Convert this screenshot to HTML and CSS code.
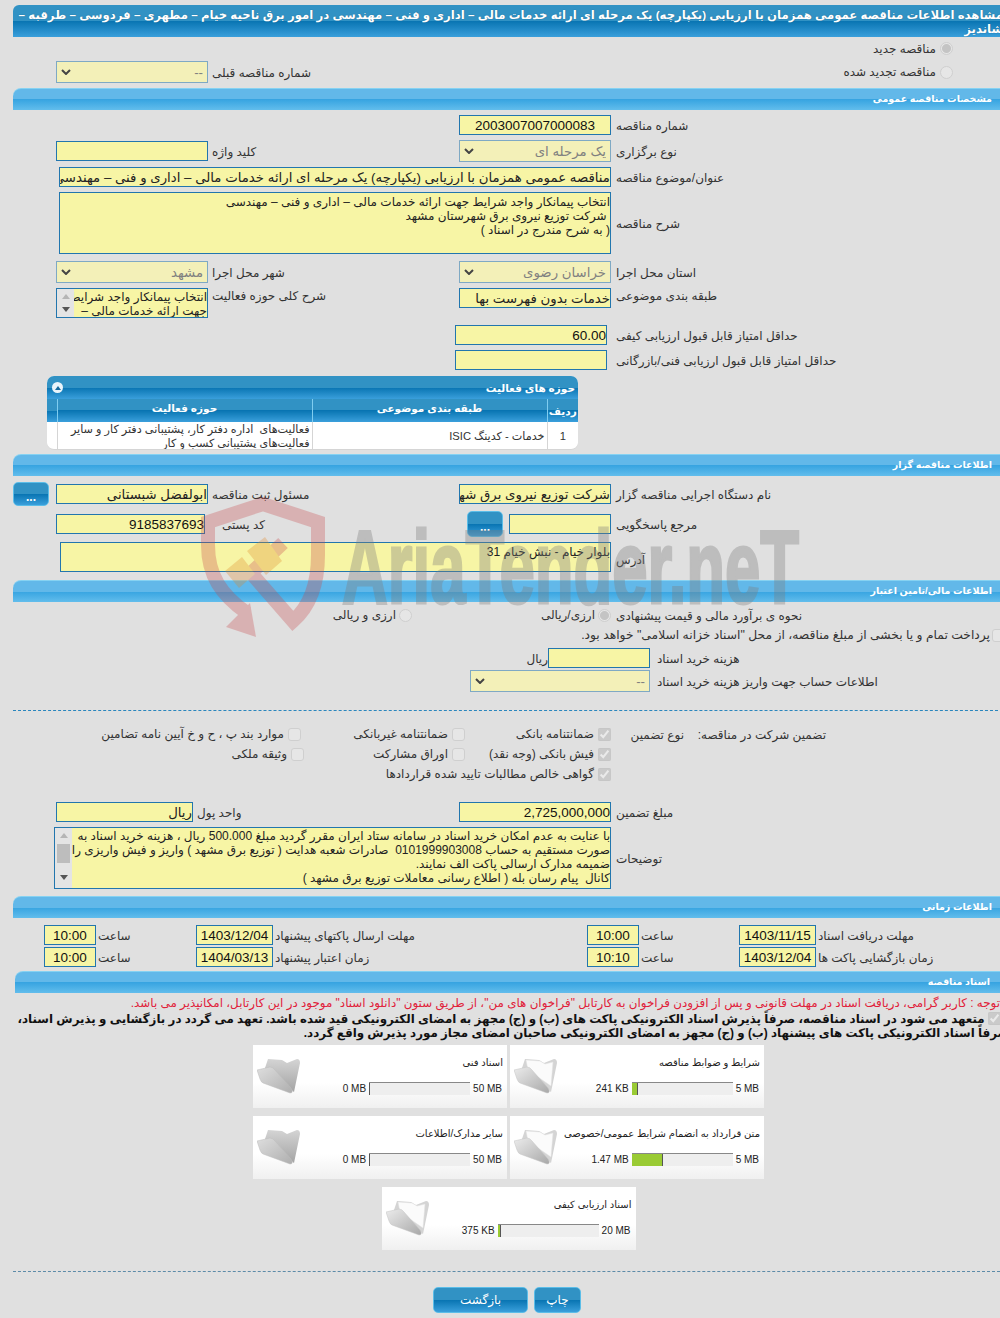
FILE: index.html
```html
<!DOCTYPE html>
<html lang="fa">
<head>
    <meta charset="UTF-8">
    <title>مشاهده اطلاعات مناقصه</title>
    <link rel="stylesheet" href="styles.css">
</head>
<body>
<svg class="defs" width="0" height="0">
    <defs>
        <linearGradient id="folderBack" x1="0" y1="0" x2="0" y2="1">
            <stop offset="0" stop-color="#d4d4d4"/>
            <stop offset="1" stop-color="#a4a4a4"/>
        </linearGradient>
        <linearGradient id="folderFront" x1="0" y1="0" x2="1" y2="1">
            <stop offset="0" stop-color="#dedede"/>
            <stop offset="1" stop-color="#aeaeae"/>
        </linearGradient>
        <linearGradient id="folderFrontLight" x1="0" y1="0" x2="1" y2="1">
            <stop offset="0" stop-color="#ececec"/>
            <stop offset="1" stop-color="#a8a8a8"/>
        </linearGradient>
        <symbol id="folderGrey" viewBox="0 0 43 36">
            <path d="M11 1 L25 2 L30 5 L40 1 Q43 1 43 5 L37 34 L8 10 Z" fill="url(#folderBack)"/>
            <path d="M0 12 L13 9 Q16 9 18 12 L34 30 Q37 35 33 35 L6 25 Q4 24 3 21 Z" fill="url(#folderFront)" stroke="#bdbdbd" stroke-width=".5"/>
        </symbol>
        <symbol id="folderPaper" viewBox="0 0 43 36">
            <path d="M11 1 L25 2 L30 5 L40 1 Q43 1 43 5 L37 34 L8 10 Z" fill="#d4d4d4"/>
            <path d="M12 2 L26 3 L31 6 L39 4 L37 28 L14 12 Z" fill="#fbfbfb" stroke="#e2e2e2" stroke-width=".5"/>
            <path d="M0 12 L13 9 Q16 9 18 12 L34 30 Q37 35 33 35 L6 25 Q4 24 3 21 Z" fill="url(#folderFrontLight)" stroke="#c4c4c4" stroke-width=".5"/>
        </symbol>
    </defs>
</svg>

<div class="page">
    <h1 class="title-bar">مشاهده اطلاعات مناقصه عمومی همزمان با ارزیابی (یکپارچه) یک مرحله ای ارائه خدمات مالی – اداری و فنی – مهندسی در امور برق ناحیه خیام – مطهری – فردوسی – طرقبه – شاندیز</h1>

    <div class="row row-radio">
        <span></span><span></span><span></span><span></span>
        <label class="radio-right"><input type="radio" name="renew" checked disabled> مناقصه جدید</label>
    </div>
    <div class="row row-radio2">
        <span></span>
        <select class="ctl ctl-off" disabled><option>--</option></select>
        <span class="lbl">شماره مناقصه قبلی</span>
        <span></span>
        <label class="radio-right"><input type="radio" name="renew" disabled> مناقصه تجدید شده</label>
    </div>

    <div class="bar">مشخصات مناقصه عمومی</div>

    <div class="row first">
        <span></span><span></span><span></span>
        <input class="ctl num num-mid" value="2003007007000083" readonly>
        <span class="lbl lbl-r">شماره مناقصه</span>
    </div>
    <div class="row h22">
        <span></span>
        <input class="ctl" readonly>
        <span class="lbl">کلید واژه</span>
        <select class="ctl ctl-off" disabled><option>یک مرحله ای</option></select>
        <span class="lbl lbl-r">نوع برگزاری</span>
    </div>
    <div class="row">
        <input class="ctl wide" value="مناقصه عمومی همزمان با ارزیابی (یکپارچه) یک مرحله ای ارائه خدمات مالی – اداری و فنی – مهندسی" readonly>
        <span class="lbl lbl-r">عنوان/موضوع مناقصه</span>
    </div>
    <div class="row h62">
        <textarea class="ctl wide area" readonly>انتخاب پیمانکار واجد شرایط جهت ارائه خدمات مالی – اداری و فنی – مهندسی
 شرکت توزیع نیروی برق شهرستان مشهد
( به شرح مندرج در اسناد )</textarea>
        <span class="lbl lbl-r">شرح مناقصه</span>
    </div>
    <div class="row h22 mt7">
        <span></span>
        <select class="ctl ctl-off" disabled><option>مشهد</option></select>
        <span class="lbl">شهر محل اجرا</span>
        <select class="ctl ctl-off" disabled><option>خراسان رضوی</option></select>
        <span class="lbl lbl-r">استان محل اجرا</span>
    </div>
    <div class="row h30 top">
        <span></span>
        <div class="ctl scrollbox">
            <div class="scroll-track">
                <i class="arrow-up"></i>
                <i class="arrow-down"></i>
            </div>
            <div class="scroll-text">انتخاب پیمانکار واجد شرایط<br>جهت ارائه خدمات مالی –</div>
        </div>
        <span class="lbl lbl-top">شرح کلی حوزه فعالیت</span>
        <input class="ctl" value="خدمات بدون فهرست بها" readonly>
        <span class="lbl lbl-r lbl-top">طبقه بندی موضوعی</span>
    </div>
    <div class="row mt7">
        <span></span><span></span><span></span>
        <input class="ctl num score" value="60.00" readonly>
        <span class="lbl lbl-r">حداقل امتیاز قابل قبول ارزیابی کیفی</span>
    </div>
    <div class="row">
        <span></span><span></span><span></span>
        <input class="ctl score" readonly>
        <span class="lbl lbl-r">حداقل امتیاز قابل قبول ارزیابی فنی/بازرگانی</span>
    </div>

    <div class="panel">
        <div class="panel-head">
            <span>حوزه های فعالیت</span>
            <span class="collapse"><i></i></span>
        </div>
        <table class="grid">
            <colgroup>
                <col class="col-no"><col class="col-cat"><col class="col-act"><col class="col-end">
            </colgroup>
            <thead>
                <tr><th class="th-no">ردیف</th><th>طبقه بندی موضوعی</th><th>حوزه فعالیت</th><th></th></tr>
            </thead>
            <tbody>
                <tr>
                    <td class="cell-no">1</td>
                    <td>خدمات - کدینگ ISIC</td>
                    <td class="cell-act">فعالیت‌های &nbsp;اداره دفتر کار، پشتیبانی دفتر کار و سایر فعالیت‌های پشتیبانی کسب و کار</td>
                    <td></td>
                </tr>
            </tbody>
        </table>
    </div>

    <div class="bar bar-tight">اطلاعات مناقصه گزار</div>

    <div class="row h24 first6">
        <button class="dots dots-left">...</button>
        <input class="ctl" value="ابولفضل شبستانی" readonly>
        <span class="lbl">مسئول ثبت مناقصه</span>
        <input class="ctl" value="شرکت توزیع نیروی برق شهرستان مشهد" readonly>
        <span class="lbl lbl-r">نام دستگاه اجرایی مناقصه گزار</span>
    </div>
    <div class="row h24">
        <span></span>
        <div class="span-left">
            <input class="ctl w149 num" value="9185837693" readonly>
            <span class="lbl lbl-far">کد پستی</span>
        </div>
        <div class="ref-cell">
            <button class="dots">...</button>
            <input class="ctl w102" readonly>
        </div>
        <span class="lbl lbl-r">مرجع پاسخگویی</span>
    </div>
    <div class="row h30 mt7">
        <textarea class="ctl wide addr" readonly>بلوار خیام - نبش خیام 31</textarea>
        <span class="lbl lbl-r lbl-low">آدرس</span>
    </div>

    <div class="bar bar-finance">اطلاعات مالی/تامین اعتبار</div>

    <div class="row h20 mt4">
        <span></span><span></span>
        <label class="radio-left radio-far"><input type="radio" name="cur" disabled> ارزی و ریالی</label>
        <label class="radio-left"><input type="radio" name="cur" checked disabled> ارزی/ریالی</label>
        <span class="lbl lbl-r">نحوه ی برآورد مالی و قیمت پیشنهادی</span>
    </div>
    <label class="treasury"><input type="checkbox" disabled> پرداخت تمام و یا بخشی از مبلغ مناقصه، از محل "اسناد خزانه اسلامی" خواهد بود.</label>
    <div class="cost-row">
        <span></span>
        <div class="cost-cell">
            <span class="unit">ریال</span>
            <input class="ctl w102" readonly>
        </div>
        <span class="lbl lbl-r">هزینه خرید اسناد</span>
    </div>
    <div class="cost-row h22">
        <span></span>
        <select class="ctl ctl-off" disabled><option>--</option></select>
        <span class="lbl lbl-r">اطلاعات حساب جهت واریز هزینه خرید اسناد</span>
    </div>

    <hr class="dash">

    <div class="guarantee">
        <span></span>
        <span class="lbl">تضمین شرکت در مناقصه:</span>
        <span class="lbl">نوع تضمین</span>
        <label class="check"><input type="checkbox" checked disabled> ضمانتنامه بانکی</label>
        <label class="check"><input type="checkbox" disabled> ضمانتنامه غیربانکی</label>
        <label class="check"><input type="checkbox" disabled> موارد بند پ ، ح و خ آیین نامه تضامین</label>

        <span></span><span></span><span></span>
        <label class="check"><input type="checkbox" checked disabled> فیش بانکی (وجه نقد)</label>
        <label class="check"><input type="checkbox" disabled> اوراق مشارکت</label>
        <label class="check shift"><input type="checkbox" disabled> وثیقه ملکی</label>

        <span></span><span></span><span></span>
        <label class="check check-long"><input type="checkbox" checked disabled> گواهی خالص مطالبات تایید شده قراردادها</label>
    </div>

    <div class="row amount">
        <span></span>
        <div class="span-left">
            <input class="ctl w137" value="ریال" readonly>
            <span class="lbl">واحد پول</span>
        </div>
        <input class="ctl num" value="2,725,000,000" readonly>
        <span class="lbl lbl-r">مبلغ تضمین</span>
    </div>
    <div class="row h62">
        <div class="ctl wide notes">
            <div class="scroll-track scroll-tall">
                <i class="arrow-up"></i>
                <b class="thumb"></b>
                <i class="arrow-down"></i>
            </div>
            <div class="scroll-text">با عنایت به عدم امکان خرید اسناد در سامانه ستاد ایران مقرر گردید مبلغ 500.000 ریال ، هزینه خرید اسناد به<br>صورت مستقیم به حساب 0101999903008 &nbsp;صادرات شعبه هدایت ( توزیع برق مشهد ) واریز و فیش واریزی را<br>ضمیمه مدارک ارسالی پاکت الف نمایند.<br>کانال &nbsp;پیام رسان بله ( اطلاع رسانی معاملات توزیع برق مشهد )</div>
        </div>
        <span class="lbl lbl-r">توضیحات</span>
    </div>

    <div class="bar bar-time">اطلاعات زمانی</div>

    <div class="time-row first-time">
        <input class="ctl num-c" value="10:00" readonly>
        <span class="lbl">ساعت</span>
        <input class="ctl num-c" value="1403/12/04" readonly>
        <span class="lbl">مهلت ارسال پاکتهای پیشنهاد</span>
        <input class="ctl num-c" value="10:00" readonly>
        <span class="lbl">ساعت</span>
        <input class="ctl num-c" value="1403/11/15" readonly>
        <span class="lbl">مهلت دریافت اسناد</span>
    </div>
    <div class="time-row">
        <input class="ctl num-c" value="10:00" readonly>
        <span class="lbl">ساعت</span>
        <input class="ctl num-c" value="1404/03/13" readonly>
        <span class="lbl">زمان اعتبار پیشنهاد</span>
        <input class="ctl num-c" value="10:10" readonly>
        <span class="lbl">ساعت</span>
        <input class="ctl num-c" value="1403/12/04" readonly>
        <span class="lbl">زمان بازگشایی پاکت ها</span>
    </div>

    <div class="bar bar-docs">اسناد مناقصه</div>

    <p class="notice">توجه : کاربر گرامی، دریافت اسناد در مهلت قانونی و پس از افزودن فراخوان به کارتابل "فراخوان های من"، از طریق ستون "دانلود اسناد" موجود در این کارتابل، امکانپذیر می باشد.</p>
    <p class="pledge"><input type="checkbox" checked disabled> متعهد می شود در اسناد مناقصه، صرفاً پذیرش اسناد الکترونیکی پاکت های (ب) و (ج) مجهز به امضای الکترونیکی قید شده باشد. تعهد می گردد در بازگشایی و پذیرش اسناد،<br>صرفاً اسناد الکترونیکی پاکت های پیشنهاد (ب) و (ج) مجهز به امضای الکترونیکی صاحبان امضای مجاز مورد پذیرش واقع گردد.</p>

    <div class="cards">
        <div class="card">
            <div class="card-body">
                <div class="card-title">شرایط و ضوابط مناقصه</div>
                <div class="usage"><span>5 MB</span><div class="meter"><b style="width: 5%"></b></div><span>241 KB</span></div>
            </div>
            <svg class="folder"><use href="#folderPaper"/></svg>
        </div>
        <div class="card">
            <div class="card-body">
                <div class="card-title">اسناد فنی</div>
                <div class="usage"><span>50 MB</span><div class="meter"><b style="width: 0"></b></div><span>0 MB</span></div>
            </div>
            <svg class="folder"><use href="#folderGrey"/></svg>
        </div>
        <div class="card">
            <div class="card-body">
                <div class="card-title">متن قرارداد به انضمام شرایط عمومی/خصوصی</div>
                <div class="usage"><span>5 MB</span><div class="meter"><b style="width: 30%"></b></div><span>1.47 MB</span></div>
            </div>
            <svg class="folder"><use href="#folderPaper"/></svg>
        </div>
        <div class="card">
            <div class="card-body">
                <div class="card-title">سایر مدارک/اطلاعات</div>
                <div class="usage"><span>50 MB</span><div class="meter"><b style="width: 0"></b></div><span>0 MB</span></div>
            </div>
            <svg class="folder"><use href="#folderGrey"/></svg>
        </div>
        <div class="card">
            <div class="card-body">
                <div class="card-title">اسناد ارزیابی کیفی</div>
                <div class="usage"><span>20 MB</span><div class="meter"><b style="width: 2%"></b></div><span>375 KB</span></div>
            </div>
            <svg class="folder"><use href="#folderPaper"/></svg>
        </div>
    </div>

    <hr class="dash dash-bottom">

    <div class="actions">
        <button class="btn btn-back">بازگشت</button>
        <button class="btn btn-print">چاپ</button>
    </div>

    <!-- watermark lies over the whole form -->
    <div class="watermark">
        <svg class="wm-logo" viewBox="0 0 140 150">
            <path d="M52 118 C26 100 13 80 13 50 L13 27 L68 9 L123 27 L123 60 C123 92 114 112 98 126 L56 78 L88 48" fill="none" stroke="#c8474a" stroke-width="14"/>
            <path d="M31 132 L61 142 L55 108 Z" fill="#c8474a"/>
            <path d="M30 76 L47 62 L60 79 L44 93 Z M52 56 L70 42 L87 66 L71 80 Z" fill="#e0892a"/>
        </svg>
        <span class="wm-text">AriaTender.neT</span>
    </div>
</div>
</body>
</html>
```

FILE: styles.css
```css
body {
    margin: 0;
    padding: 0;
    background-color: #e0e0e0;
    font-family: "Liberation Sans", "DejaVu Sans", sans-serif;
    font-size: 12px;
    color: #333;
}
.defs {
    position: absolute;
}
.page {
    position: relative;
    width: 1000px;
    height: 1318px;
    overflow: hidden;
    padding-top: 5px;
    box-sizing: border-box;
}
.title-bar {
    margin: 0 -3px 0 13px;
    height: 32px;
    padding: 3px 0 0 0;
    box-sizing: border-box;
    direction: rtl;
    font-size: 11.7px;
    line-height: 14px;
    font-weight: bold;
    color: #fff;
    border-top-left-radius: 6px;
    background: linear-gradient(#3192c4 0, #3192c4 50%, #0874b2 50%, #3a9fdb 100%);
    text-shadow: 0 0 1px #12587f;
}
.bar {
    margin: 5px 0 0 13px;
    height: 22px;
    line-height: 20px;
    padding-right: 8px;
    box-sizing: border-box;
    direction: rtl;
    font-size: 9.5px;
    font-weight: bold;
    color: #fff;
    border-top: 1px solid #86d2f2;
    border-top-left-radius: 8px;
    background: linear-gradient(#62b8e9 0, #62b8e9 50%, #37a4e1 50%, #62bdec 100%);
}
.bar-tight {
    margin-top: 4px;
}
.bar-finance {
    margin-top: 8px;
}
.bar-time {
    margin-top: 7px;
}
.bar-docs {
    margin: 4px 0 0 15px;
    padding-right: 10px;
}

/* form rows: left control, left label, right control, right label */
.row {
    display: grid;
    grid-template-columns: 56px 152px 251px 152px 1fr;
    align-items: center;
    height: 20px;
    margin-top: 5px;
}
.first { margin-top: 5px; }
.first6 { margin-top: 6px; height: 24px; }
.h20 { height: 20px; }
.h22 { height: 22px; }
.h24 { height: 24px; }
.h30 { height: 30px; }
.h62 { height: 62px; }
.mt4 { margin-top: 3px; }
.mt7 { margin-top: 7px; }
.top { align-items: start; }
.row-radio {
    height: 23px;
    margin-top: 0;
}
.row-radio2 {
    height: 22px;
    margin-top: 1px;
}
.amount {
    margin-top: 18px;
}
.lbl {
    direction: rtl;
    text-align: left;
    padding-left: 4px;
    margin-top: 2px;
    white-space: nowrap;
    line-height: 15px;
}
.lbl-r {
    padding-left: 5px;
}
.lbl-top {
    margin-top: 1px;
}
.lbl-low {
    margin-top: 7px;
}
.lbl-far {
    padding-left: 17px;
}
.ctl {
    display: block;
    width: 152px;
    height: 20px;
    box-sizing: border-box;
    margin: 0;
    padding: 0;
    border: 1px solid #2276ae;
    border-radius: 0;
    background-color: #f7f5a5;
    direction: rtl;
    font-family: inherit;
    font-size: 13.3px;
    color: #222;
    outline: none;
}
.ctl-off {
    appearance: none;
    opacity: 1;
    height: 22px;
    padding: 0 4px;
    border-color: #7fa9c4;
    background-color: #f3f0b8;
    background-image: url("data:image/svg+xml,%3Csvg xmlns='http://www.w3.org/2000/svg' width='10' height='6'%3E%3Cpath d='M1 1l4 4 4-4' fill='none' stroke='%23444' stroke-width='2'/%3E%3C/svg%3E");
    background-repeat: no-repeat;
    background-position: left 4px center;
    color: #808080;
}
.num {
    font-size: 13.5px;
    color: #111;
}
.num-mid {
    text-align: center;
}
.num-c {
    width: auto;
    text-align: center;
    font-size: 13.5px;
    padding: 0;
    color: #111;
}
.wide {
    grid-column: 1 / 5;
    margin-left: 59px;
    width: 552px;
}
.area {
    height: 62px;
    line-height: 14px;
    resize: none;
    overflow: hidden;
    padding: 2px 0;
    font-size: 12px;
}
.addr {
    height: 30px;
    margin-left: 60px;
    width: 551px;
    resize: none;
    overflow: hidden;
    padding: 2px 0;
    font-size: 12px;
    line-height: 14px;
}
.score {
    margin-left: -4px;
}
.w149 { width: 149px; }
.w137 { width: 137px; }
.w102 { width: 102px; }
.span-left {
    grid-column: 2 / 4;
    display: flex;
    align-items: center;
}
.ref-cell {
    display: flex;
    justify-content: space-between;
    align-items: center;
    padding-left: 8px;
}
.radio-right,
.radio-left {
    display: flex;
    direction: rtl;
    align-items: center;
    gap: 4px;
}
.radio-right {
    justify-self: end;
    margin-right: 47px;
    white-space: nowrap;
}
.radio-left {
    gap: 3px;
}
.radio-far {
    padding-right: 47px;
}
input[type="radio"],
input[type="checkbox"] {
    margin: 0;
    flex: none;
    width: 13px;
    height: 13px;
}
input[type="radio"] {
    appearance: none;
    box-sizing: border-box;
    border: 1px solid #cfcfcf;
    border-radius: 50%;
    background-color: #e6e6e6;
}
input[type="radio"]:checked {
    background: radial-gradient(circle, #c4c4c4 0, #c4c4c4 4px, #e6e6e6 5px);
}
input[type="checkbox"]:not(:checked) {
    appearance: none;
    box-sizing: border-box;
    border: 1px solid #cfcfcf;
    border-radius: 3px;
    background-color: #e6e6e6;
}

/* scrolling text boxes, drawn because the scrollbar sits on the left */
.scrollbox,
.notes {
    display: flex;
    padding: 0;
    overflow: hidden;
    direction: ltr;
}
.scrollbox {
    height: 30px;
}
.notes {
    height: 62px;
    margin-left: 54px;
    width: 557px;
}
.scroll-track {
    flex: none;
    width: 17px;
    display: flex;
    flex-direction: column;
    justify-content: space-between;
    align-items: center;
    padding: 5px 0;
    box-sizing: border-box;
    background-color: #e4e4e4;
}
.scroll-tall {
    justify-content: flex-start;
}
.thumb {
    width: 13px;
    height: 19px;
    margin: 6px 0 12px;
    background-color: #bdbdbd;
}
.arrow-up {
    border: 4px solid transparent;
    border-top: 0;
    border-bottom: 5px solid #b5b5b5;
}
.arrow-down {
    border: 4px solid transparent;
    border-bottom: 0;
    border-top: 5px solid #555;
}
.scroll-text {
    flex: 1;
    direction: rtl;
    font-size: 12px;
    line-height: 14px;
    white-space: nowrap;
    overflow: hidden;
    padding: 1px 0 0 0;
}

/* activity table */
.panel {
    width: 531px;
    margin: 6px 0 0 47px;
    border-radius: 7px;
    overflow: hidden;
    background-color: #fff;
    direction: rtl;
    border-bottom: 1px solid #d5d5d5;
    box-sizing: border-box;
    height: 74px;
}
.panel-head,
.grid th {
    background: linear-gradient(#3192c4 0, #3192c4 50%, #0874b2 50%, #3a9fdb 100%);
    color: #fff;
    font-weight: bold;
    font-size: 10.5px;
}
.panel-head {
    display: flex;
    justify-content: space-between;
    align-items: center;
    height: 23px;
    padding: 0 3px 0 5px;
}
.collapse {
    width: 11px;
    height: 11px;
    border-radius: 50%;
    background-color: #e9f4fa;
    display: flex;
    align-items: center;
    justify-content: center;
}
.collapse i {
    border: 3px solid transparent;
    border-top: 0;
    border-bottom: 4px solid #14699d;
}
.grid {
    width: 531px;
    table-layout: fixed;
    border-collapse: collapse;
}
.col-no { width: 31px; }
.col-cat { width: 235px; }
.col-act { width: 255px; }
.col-end { width: 10px; }
.grid th {
    height: 23px;
    padding: 0 0 5px;
    box-sizing: border-box;
    border-left: 1px solid #7fcdf0;
}
.grid .th-no {
    padding: 1px 0 0;
}
.grid th:last-child {
    border-left: 0;
}
.grid td {
    height: 27px;
    padding: 0 2px;
    font-size: 11.2px;
    line-height: 14px;
    border-left: 1px solid #d5d5d5;
}
.grid td:last-child {
    border-left: 0;
}
.cell-no {
    text-align: center;
}

/* dots buttons */
.dots {
    width: 36px;
    height: 26px;
    padding: 6px 0 0;
    border: 1px solid #5bbde8;
    border-radius: 5px;
    background: linear-gradient(#3192c4 0, #3192c4 50%, #0874b2 50%, #3a9fdb 100%);
    color: #fff;
    font-family: inherit;
    font-size: 12px;
    font-weight: bold;
    flex: none;
}
.dots-left {
    margin-left: 13px;
    height: 24px;
}

.treasury {
    display: flex;
    direction: rtl;
    align-items: center;
    gap: 2px;
    height: 20px;
    font-size: 12.3px;
    white-space: nowrap;
    margin-right: -5px;
    width: 1005px;
}
.cost-row {
    display: grid;
    grid-template-columns: 470px 180px 1fr;
    align-items: center;
    height: 20px;
    margin-top: 3px;
}
.cost-cell {
    display: flex;
    justify-content: flex-end;
    align-items: center;
}
.cost-row .ctl-off {
    width: 180px;
}
.cost-row .lbl-r {
    padding-left: 7px;
}
.cost-row.h22 {
    height: 22px;
    margin-top: 2px;
}
.unit {
    direction: rtl;
    margin-top: 2px;
}

.dash {
    height: 0;
    margin: 18px 2px 0 13px;
    border: 0;
    border-top: 1px dashed #2a86bd;
}
.dash-bottom {
    margin: 21px 0 0 13px;
    border-top-color: #5d8ba8;
}

/* guarantee checkboxes, laid out from the right */
.guarantee {
    display: grid;
    direction: rtl;
    grid-template-columns: 174px 142px 73px 146px 164px 1fr;
    grid-auto-rows: 20px;
    align-items: center;
    margin-top: 13px;
    white-space: nowrap;
}
.guarantee .lbl {
    text-align: right;
    padding: 0;
}
.check {
    display: flex;
    align-items: center;
    gap: 4px;
    white-space: nowrap;
}
.check-long {
    grid-column: 4 / 7;
}
.shift {
    margin-right: -3px;
}

.time-row {
    display: grid;
    grid-template-columns: 44px 52px 100px 77px 314px 52px 100px 77px 1fr;
    align-items: center;
    height: 20px;
    margin-top: 2px;
}
.time-row .ctl:nth-child(1) { grid-column: 2; }
.time-row .lbl:nth-child(2) { grid-column: 3; }
.time-row .lbl {
    padding-left: 2px;
}
.first-time {
    margin-top: 7px;
}

.notice {
    margin: 3px 0 0;
    direction: rtl;
    color: #e0213a;
    font-size: 11.9px;
    line-height: 14px;
    white-space: nowrap;
}
.pledge {
    margin: 2px -9px 0 0;
    direction: rtl;
    color: #111;
    font-size: 11.85px;
    font-weight: bold;
    line-height: 14px;
    white-space: nowrap;
}
.pledge input {
    margin-right: 8px;
    vertical-align: -2px;
}

/* document cards */
.cards {
    display: flex;
    flex-wrap: wrap;
    direction: rtl;
    justify-content: center;
    gap: 8px 3px;
    width: 511px;
    margin: 5px 0 0 253px;
}
.card {
    display: flex;
    width: 254px;
    height: 63px;
    box-sizing: border-box;
    padding: 0 3px 0 4px;
    background: linear-gradient(#fff 0, #fff 60%, #f0f0f0 100%);
}
.card-body {
    flex: 1;
    padding-top: 10px;
}
.card-title {
    font-size: 10px;
    line-height: 15px;
    color: #222;
    white-space: nowrap;
    margin-right: 1px;
}
.usage {
    display: flex;
    align-items: center;
    gap: 3px;
    margin-top: 12px;
    padding-right: 2px;
    font-size: 10px;
    color: #222;
}
.usage span {
    direction: ltr;
    white-space: nowrap;
}
.meter {
    width: 101px;
    height: 13px;
    box-sizing: border-box;
    direction: ltr;
    border-top: 1px solid #888;
    background-color: #eee;
}
.meter b {
    display: block;
    height: 12px;
    background-color: #9acb34;
    border-right: 1px solid #555;
}
.folder {
    flex: none;
    width: 43px;
    height: 36px;
    margin-top: 13px;
}

.actions {
    display: flex;
    direction: rtl;
    justify-content: flex-start;
    gap: 6px;
    margin: 15px 419px 0 0;
}
.btn {
    height: 26px;
    padding: 0;
    border: 1px solid #5bbde8;
    border-radius: 5px;
    background: linear-gradient(#3192c4 0, #3192c4 50%, #0874b2 50%, #3a9fdb 100%);
    color: #fff;
    font-family: inherit;
    font-size: 12px;
}
.btn-back { width: 95px; order: 2; }
.btn-print { width: 47px; order: 1; }

/* watermark */
.watermark {
    position: absolute;
    left: 0;
    top: 0;
    pointer-events: none;
}
.wm-logo {
    position: absolute;
    left: 195px;
    top: 495px;
    width: 140px;
    height: 150px;
    opacity: 0.3;
}
.wm-text {
    position: absolute;
    left: 342px;
    top: 515px;
    font-size: 104px;
    line-height: 104px;
    font-weight: bold;
    color: #7d7d7d;
    -webkit-text-stroke: 3px #7d7d7d;
    opacity: 0.35;
    white-space: nowrap;
    transform: scaleX(0.61);
    transform-origin: left top;
}
```
